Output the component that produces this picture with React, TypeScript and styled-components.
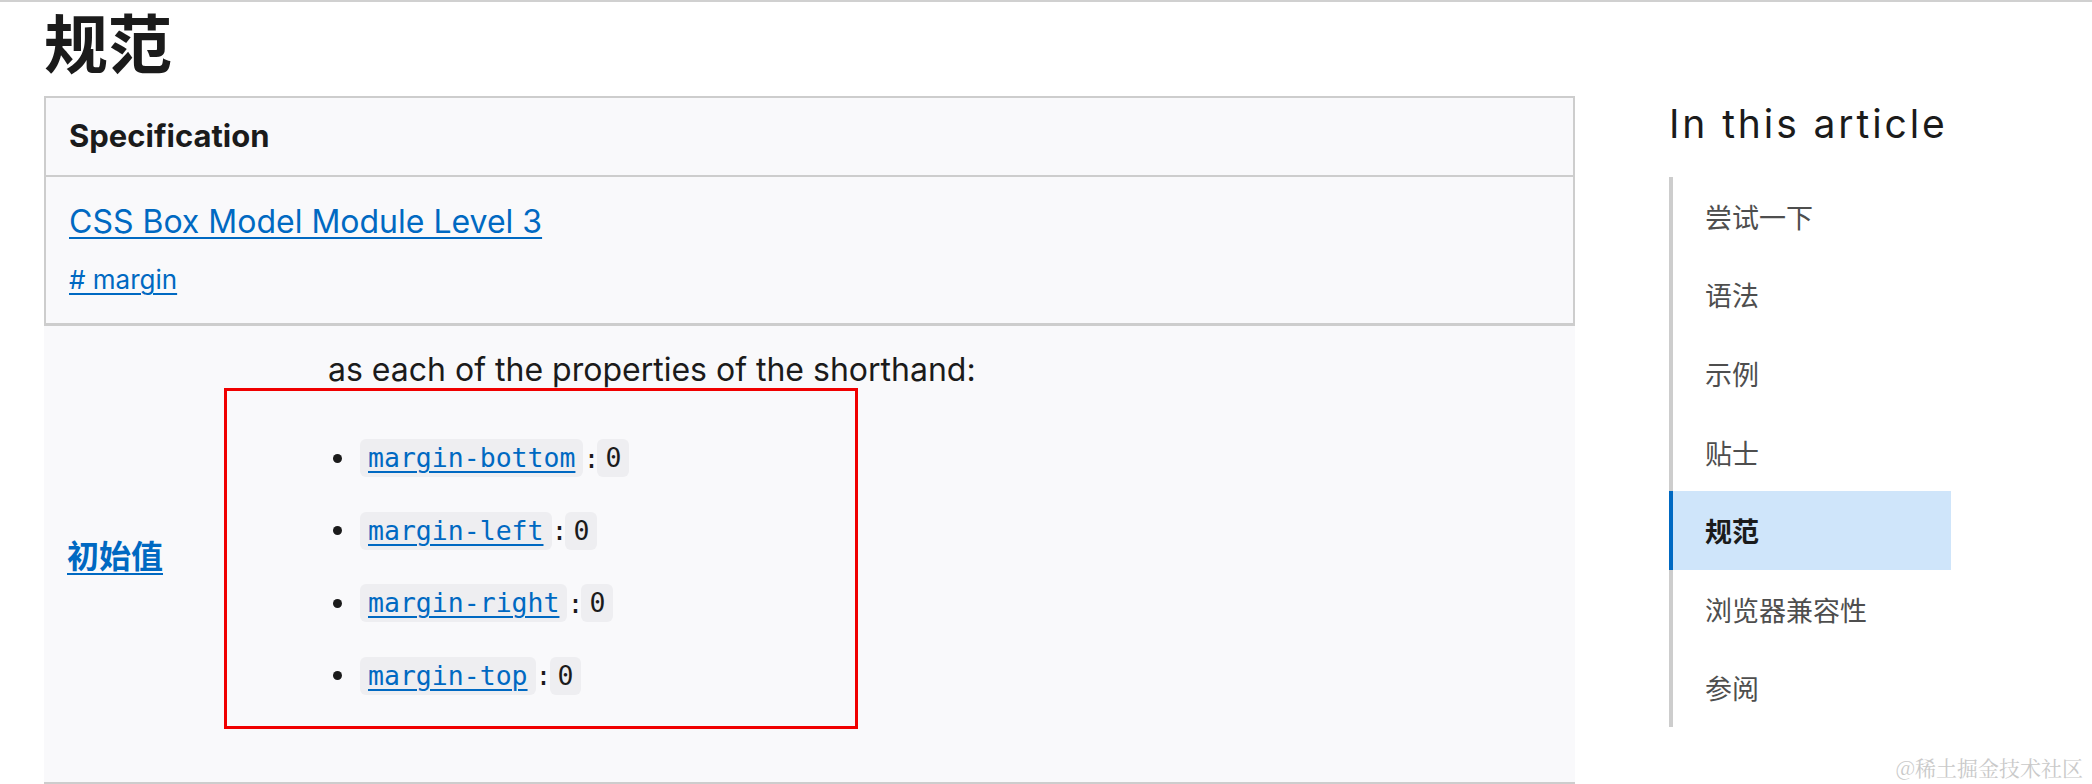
import React from 'react';
import styled, { createGlobalStyle } from 'styled-components';

const GlobalStyle = createGlobalStyle`
  body {
    margin: 0;
    background: #ffffff;
    font-family: Inter, "Noto Sans CJK SC", sans-serif;
    color: #1b1b1b;
  }
`;

const colors = {
  text: '#1b1b1b',
  link: '#0069c2',
  border: '#cdcdcd',
  tableBg: '#f9f9fb',
  codeBg: '#eeeef1',
  navText: '#4e4e4e',
  activeBg: '#cfe5fa',
};

const Page = styled.div`
  position: relative;
  width: 2092px;
  height: 784px;
  overflow: hidden;
  border-top: 2px solid #d0d0d0;
  box-sizing: border-box;
  display: flex;
  align-items: flex-start;
  gap: 94px;
`;

const Main = styled.main`
  padding-left: 44px;
  width: 1531px;
  flex-shrink: 0;
`;

const Heading = styled.h1`
  margin: 0 0 17px;
  font-family: "Noto Sans CJK SC", sans-serif;
  font-size: 64px;
  font-weight: 700;
  line-height: 77px;
`;

const Table = styled.div`
  width: 100%;
  background: ${colors.tableBg};
`;

const HeaderRow = styled.div`
  height: 81px;
  border: 2px solid ${colors.border};
  box-sizing: border-box;
  display: flex;
  align-items: center;
  padding: 0 0 2px 23px;
  font-size: 31px;
  font-weight: 700;
`;

const SpecRow = styled.div`
  height: 149px;
  box-sizing: border-box;
  border: 2px solid ${colors.border};
  border-top: none;
  border-bottom-width: 3px;
  padding: 22px 0 0 23px;
  display: flex;
  flex-direction: column;
  align-items: flex-start;
  gap: 16px;
`;

const Link = styled.a<{ size: number }>`
  color: ${colors.link};
  font-size: ${(p) => p.size}px;
  line-height: ${(p) => Math.round(p.size * 1.45)}px;
  text-decoration: underline;
  text-underline-offset: 4px;
  text-decoration-thickness: 2px;
`;

const ValueRow = styled.div`
  position: relative;
  height: 459px;
  box-sizing: border-box;
  border-bottom: 3px solid ${colors.border};
  display: flex;
  align-items: stretch;
`;

const RowHead = styled.div`
  width: 284px;
  flex-shrink: 0;
  display: flex;
  align-items: center;
  padding-left: 23px;
  box-sizing: border-box;
`;

const HeadLink = styled.a`
  color: ${colors.link};
  font-family: "Noto Sans CJK SC", sans-serif;
  font-weight: 700;
  font-size: 32px;
  text-decoration: underline;
  text-underline-offset: 5px;
  text-decoration-thickness: 2px;
`;

const Cell = styled.div`
  padding-top: 22px;
`;

const Para = styled.p`
  margin: 0;
  font-size: 32px;
  line-height: 44px;
`;

const List = styled.ul`
  list-style: none;
  margin: 30px 0 0;
  padding: 0 0 0 5px;
`;

const Item = styled.li`
  height: 72.5px;
  display: flex;
  align-items: center;
  font-size: 26.5px;
  &::before {
    content: '';
    width: 9px;
    height: 9px;
    border-radius: 50%;
    background: ${colors.text};
    margin-right: 18px;
  }
`;

const Code = styled.code`
  font-family: "DejaVu Sans Mono", "Liberation Mono", monospace;
  font-size: 26.5px;
  line-height: 38px;
  background: ${colors.codeBg};
  border-radius: 6px;
  padding: 0 8px;
`;

const CodeLink = styled.a`
  color: ${colors.link};
  text-decoration: underline;
  text-underline-offset: 4px;
  text-decoration-thickness: 2px;
`;

const Colon = styled.span`
  font-family: "DejaVu Sans Mono", monospace;
  margin: 0 -2px 0 0;
`;

const Highlight = styled.div`
  position: absolute;
  left: 180px;
  top: 62px;
  width: 634px;
  height: 341px;
  box-sizing: border-box;
  border: 3px solid #f00000;
  pointer-events: none;
`;

const Aside = styled.aside`
  padding-top: 98px;
  width: 300px;
`;

const AsideTitle = styled.h2`
  margin: 0 0 29px;
  font-size: 39px;
  font-weight: 400;
  line-height: 48px;
  letter-spacing: 2.9px;
  white-space: nowrap;
`;

const Nav = styled.ul`
  list-style: none;
  margin: 0;
  padding: 0;
  width: 278px;
  border-left: 4px solid ${colors.border};
`;

const NavItem = styled.li<{ active?: boolean }>`
  height: 78.6px;
  display: flex;
  align-items: center;
  padding-left: 32px;
  margin-left: -4px;
  border-left: 4px solid ${(p) => (p.active ? colors.link : 'transparent')};
  background: ${(p) => (p.active ? colors.activeBg : 'transparent')};
  font-family: "Noto Sans CJK SC", sans-serif;
  font-size: 27px;
  font-weight: ${(p) => (p.active ? 700 : 400)};
  color: ${(p) => (p.active ? colors.text : colors.navText)};
`;

const Watermark = styled.div`
  position: absolute;
  right: 9px;
  bottom: 2px;
  font-family: "Noto Serif CJK SC", "Noto Sans CJK SC", serif;
  font-size: 21px;
  color: #c9c9c9;
`;

const props = ['margin-bottom', 'margin-left', 'margin-right', 'margin-top'];
const navItems = ['尝试一下', '语法', '示例', '贴士', '规范', '浏览器兼容性', '参阅'];

const App = () => (
  <>
    <GlobalStyle />
    <Page>
      <Main>
        <Heading>规范</Heading>
        <Table>
          <HeaderRow>Specification</HeaderRow>
          <SpecRow>
            <Link size={32} href="#">CSS Box Model Module Level 3</Link>
            <Link size={26} href="#"># margin</Link>
          </SpecRow>
          <ValueRow>
            <RowHead>
              <HeadLink href="#">初始值</HeadLink>
            </RowHead>
            <Cell>
              <Para>as each of the properties of the shorthand:</Para>
              <List>
                {props.map((name) => (
                  <Item key={name}>
                    <Code>
                      <CodeLink href="#">{name}</CodeLink>
                    </Code>
                    <Colon>:</Colon>
                    <Code>0</Code>
                  </Item>
                ))}
              </List>
            </Cell>
            <Highlight />
          </ValueRow>
        </Table>
      </Main>
      <Aside>
        <AsideTitle>In this article</AsideTitle>
        <Nav>
          {navItems.map((label) => (
            <NavItem key={label} active={label === '规范'}>
              {label}
            </NavItem>
          ))}
        </Nav>
      </Aside>
      <Watermark>@稀土掘金技术社区</Watermark>
    </Page>
  </>
);

export default App;
